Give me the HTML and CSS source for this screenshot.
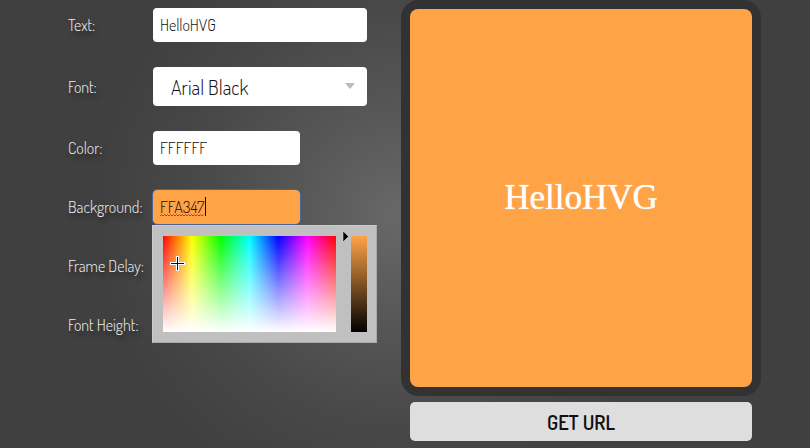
FILE: index.html
```html
<!DOCTYPE html>
<html lang="en">
<head>
<meta charset="utf-8">
<meta name="viewport" content="width=device-width, initial-scale=1">
<title>Text animation generator</title>
<link rel="stylesheet" href="styles.css">
</head>
<body>
<main class="page">
  <form class="form">
    <div class="row">
      <label for="text">Text:</label>
      <input class="field" id="text" type="text" value="HelloHVG">
    </div>
    <div class="row">
      <label for="font">Font:</label>
      <div class="select">
        <select class="field field-select" id="font"><option>Arial Black</option></select>
        <svg class="select-arrow" viewBox="0 0 10 6" aria-hidden="true"><path d="M0 0h10L5 6z"/></svg>
      </div>
    </div>
    <div class="row">
      <label for="color">Color:</label>
      <input class="field field-short" id="color" type="text" value="FFFFFF">
    </div>
    <div class="row">
      <label for="background">Background:</label>
      <div class="color-field">
        <input class="field field-active" id="background" type="text" value="FFA347">
        <svg class="spelling" viewBox="0 0 45 3" aria-hidden="true"><path d="M0 2l1.500-1.500 1.500 1.500 1.500-1.500 1.500 1.500 1.500-1.500 1.500 1.500 1.500-1.500 1.500 1.500 1.500-1.500 1.500 1.500 1.500-1.500 1.500 1.500 1.500-1.500 1.500 1.500 1.500-1.500 1.500 1.500 1.500-1.500 1.500 1.500 1.500-1.500 1.500 1.500 1.500-1.500 1.500 1.500 1.500-1.500 1.500 1.500 1.500-1.500 1.500 1.500 1.500-1.500 1.500 1.500 1.500-1.500"/></svg>
        <span class="caret" aria-hidden="true"></span>
        <div class="picker">
          <div class="spectrum">
            <svg class="cross" viewBox="0 0 15 15" aria-hidden="true">
              <path class="cross-edge" d="M7.5 0v15M0 7.5h15"/>
              <path class="cross-line" d="M7.5 1v13M1 7.5h13"/>
            </svg>
          </div>
          <div class="brightness">
            <svg class="pointer" viewBox="0 0 7 11" aria-hidden="true"><path d="M1 0v11l5.500-5.500z"/></svg>
            <input class="brightness-range" type="range" aria-label="Brightness" value="100">
          </div>
        </div>
      </div>
    </div>
    <div class="row">
      <label for="delay">Frame Delay:</label>
      <input class="field field-short" id="delay" type="text">
    </div>
    <div class="row">
      <label for="height">Font Height:</label>
      <input class="field field-short" id="height" type="text">
    </div>
  </form>
  <section class="result">
    <div class="frame"><div class="preview">HelloHVG</div></div>
    <button class="get-url" type="button">GET URL</button>
  </section>
</main>
</body>
</html>
```
FILE: styles.css
```css
* { box-sizing: border-box; }

body {
  margin: 0;
  min-height: 100vh;
  background: #404040 radial-gradient(circle at 400px 215px, #686868 0, #565656 110px, #484848 210px, #404040 300px) no-repeat;
  font-family: "Dosis", "Liberation Sans Narrow", Roboto, sans-serif;
  font-size: 16px;
  font-weight: 300;
  color: #eee;
}

.page {
  display: grid;
  grid-template-columns: minmax(0, 299fr) minmax(0, 360fr);
  column-gap: 34px;
  align-items: start;
  padding: 0 49px 0 68px;
}

.form {
  display: grid;
  gap: 25px;
  padding-top: 8px;
}

.row {
  display: grid;
  grid-template-columns: 85px minmax(0, 1fr);
  align-items: center;
}

label {
  white-space: nowrap;
  text-shadow: 2px 4px 4px rgba(0, 0, 0, 0.5);
}

.field {
  display: block;
  width: 100%;
  height: 34px;
  padding: 0 7px;
  border: 0;
  border-radius: 4px;
  background: #fff;
  color: #111;
  font: inherit;
}

.field-short,
.color-field { width: 147px; }

.select,
.color-field { position: relative; }

.field-select {
  height: 39px;
  padding: 0 18px;
  appearance: none;
  font-size: 20px;
}

.select-arrow {
  position: absolute;
  top: 16px;
  right: 12px;
  width: 10px;
  height: 6px;
  fill: #bbb;
}

.field-active {
  background: #ffa347;
  outline: 1px solid #4b6396;
}

.spelling {
  position: absolute;
  left: 7px;
  top: 24px;
  width: 45px;
  height: 3px;
  fill: none;
  stroke: #e02c16;
}

.caret {
  position: absolute;
  left: 52px;
  top: 7px;
  width: 1px;
  height: 19px;
  background: #111;
}

.picker {
  position: absolute;
  z-index: 1;
  top: 35px;
  left: -1px;
  display: flex;
  justify-content: space-between;
  width: 225px;
  padding: 10px 9px 10px 10px;
  border: 1px solid;
  border-color: #ccc #aaa #aaa #ccc;
  background: #c0c0c0;
}

.spectrum {
  position: relative;
  width: 173px;
  height: 96px;
  background:
    linear-gradient(to bottom, transparent, #fff),
    linear-gradient(to right, #f00, #ff0, #0f0, #0ff, #00f, #f0f, #f00);
}

.cross {
  position: absolute;
  top: 20px;
  left: 7px;
  width: 15px;
  height: 15px;
}

.cross-edge { stroke: #fff; stroke-width: 3; }
.cross-line { stroke: #111; stroke-width: 1; }

.brightness { position: relative; }

.brightness-range {
  display: block;
  width: 16px;
  height: 96px;
  margin: 0;
  appearance: none;
  writing-mode: vertical-lr;
  direction: rtl;
  background: linear-gradient(to bottom, #ffa347, #000);
}

.brightness-range::-webkit-slider-thumb {
  appearance: none;
  width: 16px;
  height: 1px;
}

.pointer {
  position: absolute;
  top: -5px;
  right: 18px;
  width: 7px;
  height: 11px;
  fill: #000;
  stroke: #eee;
  stroke-width: 0.5;
}

.frame {
  padding: 9px;
  border-radius: 18px;
  background: #323232;
}

.preview {
  display: flex;
  align-items: center;
  justify-content: center;
  aspect-ratio: 342 / 378;
  border-radius: 8px;
  background: #ffa347;
  color: #fff;
  font-family: "Liberation Serif", serif;
  font-size: 35px;
  font-weight: 400;
  text-shadow: 0 0 1px #fff;
}

.get-url {
  display: block;
  width: calc(100% - 18px);
  height: 39px;
  margin: 6px 9px 0;
  padding: 0;
  border: 0;
  border-radius: 5px;
  background: #dedede;
  color: #111;
  font: inherit;
  font-size: 20px;
  font-weight: 600;
}
```
